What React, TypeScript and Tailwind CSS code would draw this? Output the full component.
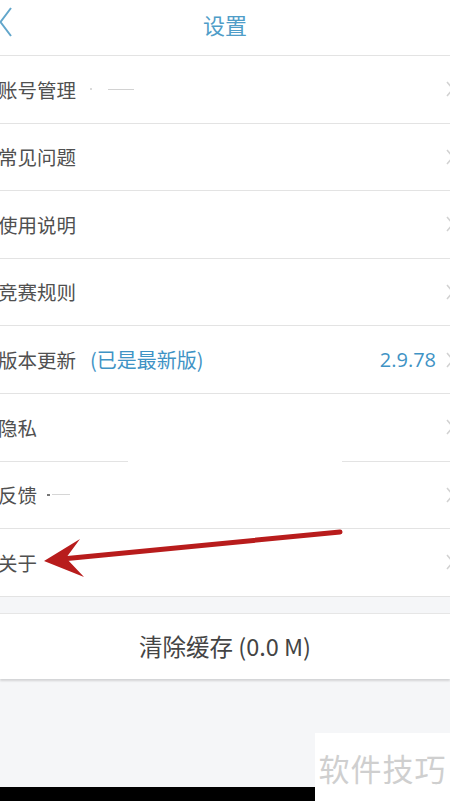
import React from 'react'

const rows = [
  { label: '账号管理', mark: 'account' },
  { label: '常见问题' },
  { label: '使用说明' },
  { label: '竞赛规则' },
  { label: '版本更新', note: '(已是最新版)', value: '2.9.78' },
  { label: '隐私', splitBorder: true },
  { label: '反馈', mark: 'feedback' },
  { label: '关于' },
]

const font = { fontFamily: '"Noto Sans CJK SC", "Noto Sans", sans-serif' }

function Chevron() {
  return (
    <svg width="10" height="18" viewBox="0 0 10 18" fill="none" stroke="#d2d2d2" strokeWidth="1.5" className="shrink-0" aria-hidden>
      <path d="M2 2l6 7-6 7" />
    </svg>
  )
}

export default function App() {
  return (
    <div className="relative w-[450px] h-[801px] overflow-hidden bg-[#f5f6f8]" style={font}>
      <header className="h-[56px] bg-white border-b border-[#e3e3e3] flex items-center justify-center relative">
        <svg width="14" height="32" viewBox="0 0 14 32" fill="none" stroke="#62a6cb" strokeWidth="2" className="absolute left-[-1px] top-[6px]" aria-hidden>
          <path d="M12 2L1.5 16 12 30" />
        </svg>
        <h1 className="mt-[-8px] text-[22px] text-[#4f9dc8] leading-none">设置</h1>
      </header>

      <ul className="bg-white">
        {rows.map((r) => (
          <li key={r.label}>
            <div className="h-[66.6px] flex items-center overflow-hidden">
              <span className="ml-[-2px] text-[19.5px] text-[#505050] leading-none">{r.label}</span>
              {r.mark === 'account' && (
                <span className="ml-[14px] flex items-center gap-[16px]">
                  <span className="w-[2px] h-[2px] bg-[#dadada]" />
                  <span className="w-[26px] h-px bg-[#d2d2d2]" />
                </span>
              )}
              {r.mark === 'feedback' && (
                <span className="ml-[10px] flex items-center gap-[2px]">
                  <span className="w-[3px] h-[2px] bg-[#777]" />
                  <span className="w-[18px] h-px bg-[#d6d6d6]" />
                </span>
              )}
              {r.note && <span className="ml-[14px] text-[20px] text-[#3f93c5] leading-none">{r.note}</span>}
              <span className="ml-auto flex items-center">
                {r.value && (
                  <span className="mr-[9px] text-[20px] text-[#3f93c5] leading-none" style={{ fontFamily: '"Open Sans", "Noto Sans", sans-serif' }}>
                    {r.value}
                  </span>
                )}
                <span className="w-[5px] overflow-hidden flex">
                  <Chevron />
                </span>
              </span>
            </div>
            {r.splitBorder ? (
              <div className="h-px flex">
                <div className="w-[128px] bg-[#e3e3e3]" />
                <div className="flex-1" />
                <div className="w-[108px] bg-[#e3e3e3]" />
              </div>
            ) : (
              <div className="h-px bg-[#e3e3e3]" />
            )}
          </li>
        ))}
      </ul>

      <div className="h-[16px]" />

      <button className="w-full h-[66px] bg-white border-t border-[#e6e6e6] shadow-[0_2px_2px_rgba(0,0,0,0.14)] flex items-center justify-center">
        <span className="text-[23.5px] text-[#444] leading-none" style={{ fontFamily: '"Noto Sans CJK SC", "Open Sans", sans-serif' }}>
          清除缓存 (0.0 M)
        </span>
      </button>

      <div className="absolute left-0 bottom-0 w-[315px] h-[14px] bg-black" />
      <div className="absolute right-0 bottom-0 w-[135px] h-[68px] bg-white flex items-center justify-center">
        <span className="text-[31px] text-[#cfcfcf] leading-none tracking-[1px]">软件技巧</span>
      </div>

      <svg className="absolute left-0 top-0 pointer-events-none" width="450" height="801" viewBox="0 0 450 801" aria-hidden>
        <path d="M340 532 L62 559" stroke="#b81c1c" strokeWidth="5" strokeLinecap="round" />
        <path d="M44 561 L80 539 L66 558 L84 577 Z" fill="#b81c1c" />
      </svg>
    </div>
  )
}
